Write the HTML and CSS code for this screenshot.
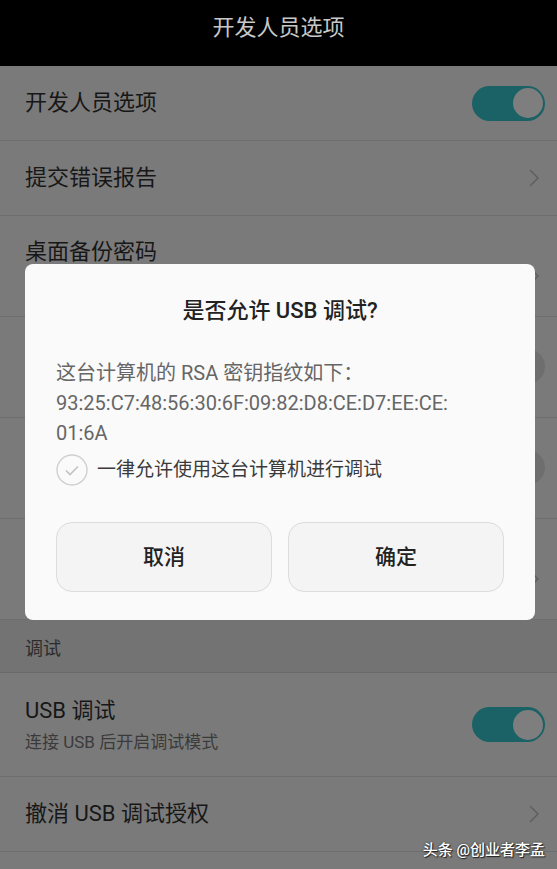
FILE: index.html
```html
<!DOCTYPE html>
<html lang="zh-CN">
<head>
    <meta charset="UTF-8">
    <meta name="viewport" content="width=device-width, initial-scale=1.0">
    <title>开发人员选项</title>
    <link rel="stylesheet" href="styles.css">
</head>
<body>
    <div class="screen">
        <div class="appbar">开发人员选项</div>

        <div class="list">
            <div class="row">
                <div class="text"><div class="title">开发人员选项</div></div>
                <span class="switch on"></span>
            </div>
            <div class="row">
                <div class="text"><div class="title">提交错误报告</div></div>
                <svg class="chevron" viewBox="0 0 12 20"><path d="M2 2 L10 10 L2 18"/></svg>
            </div>
            <div class="row tall">
                <div class="text">
                    <div class="title">桌面备份密码</div>
                    <div class="sub">桌面完整备份当前未设置密码保护</div>
                </div>
                <svg class="chevron" viewBox="0 0 12 20"><path d="M2 2 L10 10 L2 18"/></svg>
            </div>
            <div class="row tall">
                <div class="text">
                    <div class="title">不锁定屏幕</div>
                    <div class="sub">充电时屏幕不会休眠</div>
                </div>
                <span class="switch"></span>
            </div>
            <div class="row tall">
                <div class="text">
                    <div class="title">启用蓝牙 HCI 信息收集日志</div>
                    <div class="sub">捕获文件中的所有蓝牙 HCI 数据包</div>
                </div>
                <span class="switch"></span>
            </div>
            <div class="row tall">
                <div class="text">
                    <div class="title">正在运行的服务</div>
                    <div class="sub">查看和控制当前正在运行的服务</div>
                </div>
                <svg class="chevron" viewBox="0 0 12 20"><path d="M2 2 L10 10 L2 18"/></svg>
            </div>

            <div class="section">调试</div>

            <div class="row usb">
                <div class="text">
                    <div class="title">USB 调试</div>
                    <div class="sub">连接 USB 后开启调试模式</div>
                </div>
                <span class="switch on"></span>
            </div>
            <div class="row">
                <div class="text"><div class="title">撤消 USB 调试授权</div></div>
                <svg class="chevron" viewBox="0 0 12 20"><path d="M2 2 L10 10 L2 18"/></svg>
            </div>
        </div>

        <!-- dialog over the dimmed list -->
        <div class="dialog">
            <div class="dlg-title">是否允许 USB 调试?</div>
            <div class="dlg-body">
                <div class="line">这台计算机的 RSA 密钥指纹如下：</div>
                <div class="line">93:25:C7:48:56:30:6F:09:82:D8:CE:D7:EE:CE:</div>
                <div class="line">01:6A</div>
            </div>
            <div class="check">
                <svg class="circle" viewBox="0 0 32 32">
                    <circle cx="16" cy="16" r="15" />
                    <path d="M10 16.5 L14 20.5 L22 12.5" />
                </svg>
                <span>一律允许使用这台计算机进行调试</span>
            </div>
            <div class="buttons">
                <button class="btn">取消</button>
                <button class="btn">确定</button>
            </div>
        </div>

        <div class="mark">头条 @创业者李孟</div>
    </div>
</body>
</html>
```

FILE: styles.css
```css
body{
    margin:0;
    padding:0;
    font-family: Roboto, "Noto Sans CJK SC", sans-serif;
}
.screen{
    position: relative;
    width:557px;
    height:869px;
    overflow: hidden;
    background-color: #7a7a7a;
}
.appbar{
    height:66px;
    line-height:56px;
    background-color: #000;
    color: #c8c8c8;
    font-size:22px;
    text-align: center;
}
.row{
    display: flex;
    align-items: center;
    box-sizing: border-box;
    height:75px;
    padding:0 12px 0 25px;
    border-bottom:1px solid #6e6e6e;
}
.row.tall{
    height:101px;
    align-items: flex-start;
    padding-top:20px;
}
.row.usb{
    height:104px;
    align-items: center;
    padding-top:0;
}
.text{
    flex:1;
}
.title{
    font-size:22px;
    line-height:32px;
    color: #171717;
}
.sub{
    font-size:17px;
    line-height:26px;
    margin-top:2px;
    color: #3a3a3a;
}
.section{
    box-sizing: border-box;
    height:53px;
    line-height:58px;
    padding-left:25px;
    font-size:18px;
    color: #2c2c2c;
    background-color: #737373;
    border-bottom:1px solid #6a6a6a;
}
.switch{
    position: relative;
    width:73px;
    height:35px;
    border-radius:18px;
    background-color: #6e6e6e;
    flex-shrink:0;
}
.switch::after{
    content:"";
    position: absolute;
    top:2.5px;
    left:2.5px;
    width:30px;
    height:30px;
    border-radius:50%;
    background-color: #7e7e7e;
}
.switch.on{
    background-color: #1a6265;
}
.switch.on::after{
    left:auto;
    right:2.5px;
}
.row.tall .switch{
    margin-top:12px;
}
.chevron{
    width:12px;
    height:20px;
    margin-right:5px;
    fill:none;
    stroke: #5e5e5e;
    stroke-width:1.4;
}
.row.tall .chevron{
    margin-top:30px;
}

.dialog{
    position: absolute;
    left:25px;
    top:264px;
    width:510px;
    height:356px;
    box-sizing: border-box;
    padding:32px 31px 0 31px;
    background-color: #fafafa;
    border-radius:8px;
}
.dlg-title{
    text-align: center;
    font-size:22px;
    line-height:30px;
    color: #222;
    font-weight:500;
}
.dlg-body{
    margin-top:32px;
    font-size:20px;
    color: #666;
}
.line{
    height:30px;
    line-height:30px;
    white-space: nowrap;
}
.check{
    display: flex;
    align-items: center;
    margin-top:6px;
    height:32px;
}
.circle{
    width:32px;
    height:32px;
    fill:none;
}
.circle circle{
    stroke: #cfcfcf;
    stroke-width:1.4;
}
.circle path{
    stroke: #c2c2c2;
    stroke-width:1.6;
}
.check span{
    margin-left:9px;
    font-size:19px;
    line-height:32px;
    color: #3a3a3a;
}
.buttons{
    display: flex;
    gap:16px;
    margin-top:36px;
}
.btn{
    flex:1;
    height:70px;
    border:1px solid #dcdcdc;
    border-radius:16px;
    background-color: #f4f4f4;
    font-family: Roboto, "Noto Sans CJK SC", sans-serif;
    font-size:21px;
    font-weight:500;
    line-height:30px;
    color: #222;
}
.mark{
    position: absolute;
    right:12px;
    bottom:10px;
    font-size:15px;
    font-weight:500;
    color: #fff;
    text-shadow: 1px 1px 1px #222, 0 0 2px #333;
}
```
